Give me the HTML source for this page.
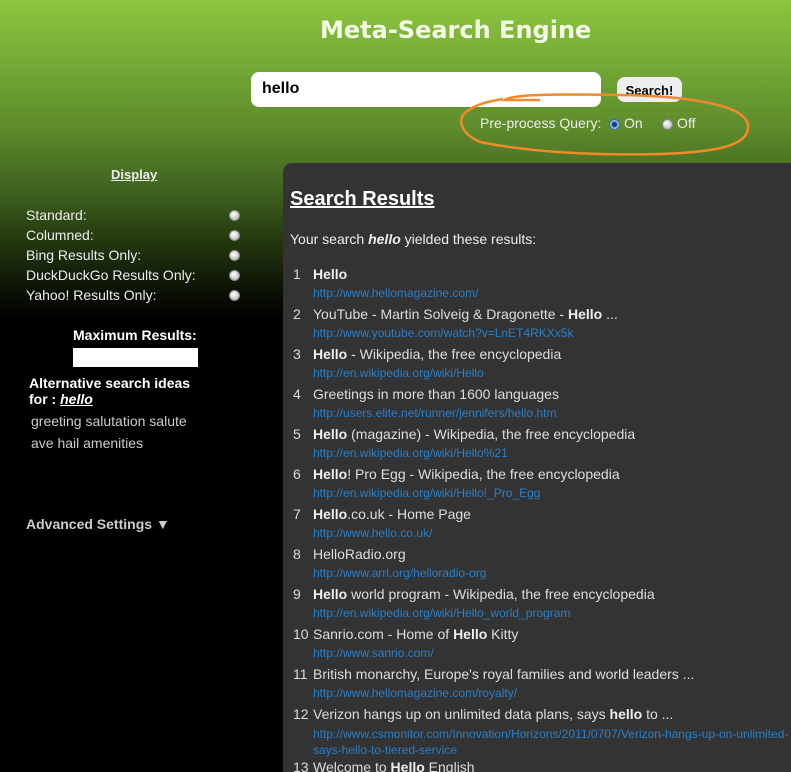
<!DOCTYPE html>
<html style="background:#000"><head><meta charset="utf-8"><style>
*{margin:0;padding:0;box-sizing:border-box}
html,body{width:791px;height:772px;overflow:hidden}
body{position:relative;font-family:"Liberation Sans",Arial,sans-serif;
background:linear-gradient(to bottom,#8dc63f 0px,#76ab36 60px,#5d8a2b 130px,#3f6320 190px,#25390f 240px,#0c1205 290px,#000 320px,#000 100%) no-repeat;background-size:791px 772px}
.a{position:absolute;white-space:nowrap}
h1{position:absolute;left:320px;top:16px;font-family:"DejaVu Sans",sans-serif;font-weight:bold;font-size:24px;color:#f4fae8;letter-spacing:0px}
.inp{position:absolute;left:251px;top:72px;width:350px;height:35px;background:#fff;border-radius:8px;font-size:16px;font-weight:bold;padding:8px 11px;color:#000}
.btn{position:absolute;left:617px;top:77px;width:65px;height:25px;background:#eee;border-radius:8px;font-size:13px;font-weight:bold;text-align:center;line-height:27px;color:#000;overflow:hidden}
.rad{display:inline-block;width:11px;height:11px;border-radius:50%;background:radial-gradient(circle at 40% 35%,#fff,#ccc 60%,#999);border:1px solid #888;vertical-align:middle}
.on{background:radial-gradient(circle,#1a3e70 0 2px,#5b9bd5 3px,#dbe9f6 5px);border-color:#3b6ea5}
.side{color:#eee;font-size:14px}
.panel{position:absolute;left:283px;top:163px;width:520px;height:609px;background:#333;border-top-left-radius:9px}
.t{position:absolute;left:313px;color:#ddd;font-size:14px;white-space:nowrap}
.n{position:absolute;left:293px;color:#ddd;font-size:14px}
.u{position:absolute;left:313px;color:#2a7fc9;font-size:12px;white-space:nowrap}
b{color:#eee}
</style></head><body>
<h1>Meta-Search Engine</h1>
<div class="inp">hello</div>
<div class="btn">Search!</div>
<div class="a" style="left:480px;top:115px;color:#eee;font-size:14px">Pre-process Query: &nbsp;<span class="rad on"></span> On &nbsp;&nbsp;&nbsp; <span class="rad"></span> Off</div>
<svg class="a" style="left:0;top:0" width="791" height="172"><path d="M540,100 L505,100 C512,94 560,94 620,95 C690,96 745,105 748,125 C750,145 720,152 660,154 C580,156 520,150 480,142 C462,134 456,120 466,112 C476,104 490,101 503,99" fill="none" stroke="#f08a2a" stroke-width="2.5"/></svg>

<div class="a" style="left:111px;top:167px;color:#eee;font-size:13px;font-weight:bold;text-decoration:underline">Display</div>
<div class="a side" style="left:26px;top:207px">Standard:</div>
<div class="a side" style="left:26px;top:227px">Columned:</div>
<div class="a side" style="left:26px;top:247px">Bing Results Only:</div>
<div class="a side" style="left:26px;top:267px">DuckDuckGo Results Only:</div>
<div class="a side" style="left:26px;top:287px">Yahoo! Results Only:</div>
<span class="a rad" style="left:229px;top:210px"></span>
<span class="a rad" style="left:229px;top:230px"></span>
<span class="a rad" style="left:229px;top:250px"></span>
<span class="a rad" style="left:229px;top:270px"></span>
<span class="a rad" style="left:229px;top:290px"></span>
<div class="a" style="left:73px;top:327px;color:#fff;font-size:14px;font-weight:bold">Maximum Results:</div>
<div class="a" style="left:73px;top:348px;width:125px;height:19px;background:#fff"></div>
<div class="a" style="left:29px;top:375px;color:#fff;font-size:14px;font-weight:bold;line-height:16px">Alternative search ideas<br>for : <i style="text-decoration:underline">hello</i></div>
<div class="a" style="left:31px;top:413px;color:#ccc;font-size:14px">greeting salutation salute</div>
<div class="a" style="left:31px;top:435px;color:#ccc;font-size:14px">ave hail amenities</div>
<div class="a" style="left:26px;top:516px;color:#ccc;font-size:14px;font-weight:bold">Advanced Settings ▼</div>

<div class="panel"></div>
<div class="a" style="left:290px;top:188px;color:#fff;font-size:20px;font-weight:bold;text-decoration:underline">Search Results</div>
<div class="a" style="left:290px;top:231px;color:#eee;font-size:14px">Your search <b><i>hello</i></b> yielded these results:</div>

<div class="n" style="top:266px">1</div><div class="t" style="top:266px"><b>Hello</b></div><div class="u" style="top:286px">http://www.hellomagazine.com/</div>
<div class="n" style="top:306px">2</div><div class="t" style="top:306px">YouTube - Martin Solveig &amp; Dragonette - <b>Hello</b> ...</div><div class="u" style="top:326px">http://www.youtube.com/watch?v=LnET4RKXx5k</div>
<div class="n" style="top:346px">3</div><div class="t" style="top:346px"><b>Hello</b> - Wikipedia, the free encyclopedia</div><div class="u" style="top:366px">http://en.wikipedia.org/wiki/Hello</div>
<div class="n" style="top:386px">4</div><div class="t" style="top:386px">Greetings in more than 1600 languages</div><div class="u" style="top:406px">http://users.elite.net/runner/jennifers/hello.htm</div>
<div class="n" style="top:426px">5</div><div class="t" style="top:426px"><b>Hello</b> (magazine) - Wikipedia, the free encyclopedia</div><div class="u" style="top:446px">http://en.wikipedia.org/wiki/Hello%21</div>
<div class="n" style="top:466px">6</div><div class="t" style="top:466px"><b>Hello</b>! Pro Egg - Wikipedia, the free encyclopedia</div><div class="u" style="top:486px">http://en.wikipedia.org/wiki/Hello!_Pro_Egg</div>
<div class="n" style="top:506px">7</div><div class="t" style="top:506px"><b>Hello</b>.co.uk - Home Page</div><div class="u" style="top:526px">http://www.hello.co.uk/</div>
<div class="n" style="top:546px">8</div><div class="t" style="top:546px">HelloRadio.org</div><div class="u" style="top:566px">http://www.arrl.org/helloradio-org</div>
<div class="n" style="top:586px">9</div><div class="t" style="top:586px"><b>Hello</b> world program - Wikipedia, the free encyclopedia</div><div class="u" style="top:606px">http://en.wikipedia.org/wiki/Hello_world_program</div>
<div class="n" style="top:626px">10</div><div class="t" style="top:626px">Sanrio.com - Home of <b>Hello</b> Kitty</div><div class="u" style="top:646px">http://www.sanrio.com/</div>
<div class="n" style="top:666px">11</div><div class="t" style="top:666px">British monarchy, Europe's royal families and world leaders ...</div><div class="u" style="top:686px">http://www.hellomagazine.com/royalty/</div>
<div class="n" style="top:706px">12</div><div class="t" style="top:706px">Verizon hangs up on unlimited data plans, says <b>hello</b> to ...</div><div class="u" style="top:726px;line-height:16px">http://www.csmonitor.com/Innovation/Horizons/2011/0707/Verizon-hangs-up-on-unlimited-<br>says-hello-to-tiered-service</div>
<div class="n" style="top:759px">13</div><div class="t" style="top:759px">Welcome to <b>Hello</b> English</div>
</body></html>
